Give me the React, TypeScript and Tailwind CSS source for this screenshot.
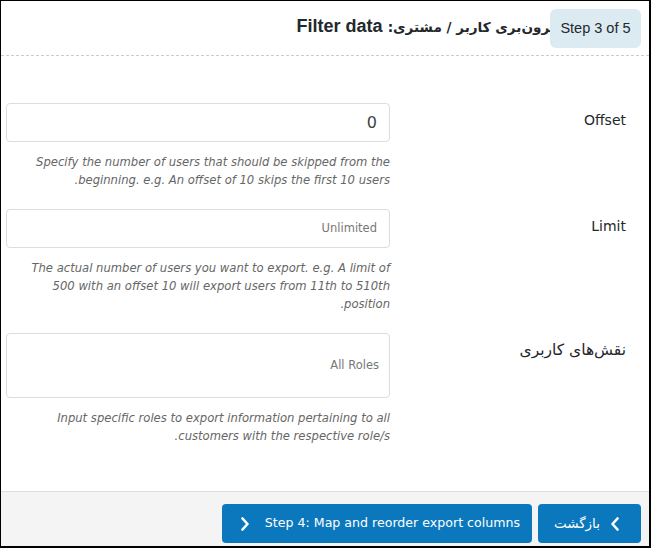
import React from "react";

const sans = "font-['DejaVu_Sans',sans-serif]";

function Chevron({ dir }: { dir: "left" | "right" }) {
  return (
    <svg width="10" height="14" viewBox="0 0 10 14" className="shrink-0">
      <polyline
        points={dir === "left" ? "7.5,1.5 2.5,7 7.5,12.5" : "2.5,1.5 7.5,7 2.5,12.5"}
        fill="none"
        stroke="white"
        strokeWidth="2.6"
        strokeLinecap="round"
        strokeLinejoin="round"
      />
    </svg>
  );
}

type Line = { text: string; tail?: string };

function Row({
  label,
  labelClass,
  children,
  help,
}: {
  label: string;
  labelClass: string;
  children: React.ReactNode;
  help: Line[];
}) {
  return (
    <div className="flex">
      {/* Label cell */}
      <div className="w-[259px] shrink-0 pr-[23px] pt-[4px] text-right">
        <span className={`${sans} leading-[20px] text-[#23282d] ${labelClass}`}>{label}</span>
      </div>
      {/* Field cell */}
      <div className="w-[384px] shrink-0">
        {children}
        <div className={`${sans} mt-[11px] text-[11.6px] italic leading-[18px] text-[#666]`}>
          {help.map((line, i) => (
            <div key={i} className="whitespace-nowrap">
              <bdi dir="ltr">{line.text}</bdi>
              {line.tail}
            </div>
          ))}
        </div>
      </div>
    </div>
  );
}

export default function App() {
  return (
    <div
      dir="rtl"
      className="flex h-[548px] w-[651px] flex-col overflow-hidden border-t border-l border-r-2 border-b-2 border-black bg-white"
    >
      {/* Header */}
      <div className="relative h-[55px] shrink-0 border-b border-dashed border-[#ccc]">
        <h2 className="pr-[94px] pt-[13px] text-right font-['Liberation_Sans','DejaVu_Sans',sans-serif] text-[18px] font-bold leading-[24px] text-[#23282d] whitespace-nowrap">
          <span className={`${sans} text-[13.6px]`}>برون‌بری کاربر / مشتری:</span> Filter data
        </h2>
        <div
          dir="ltr"
          className="absolute right-[8px] top-[8px] flex h-[39px] w-[91px] items-center justify-center rounded-[6px] bg-[#dceaf2] font-['Liberation_Sans',sans-serif] text-[14.5px] text-[#23282d]"
        >
          Step 3 of 5
        </div>
      </div>

      {/* Form */}
      <div className="flex flex-1 flex-col gap-[20px] pt-[47px]">
        <Row
          label="Offset"
          labelClass="text-[14px]"
          help={[
            { text: "Specify the number of users that should be skipped from the" },
            { text: "beginning. e.g. An offset of 10 skips the first 10 users", tail: "." },
          ]}
        >
          <div className={`${sans} flex h-[39px] items-center rounded-[4px] border border-[#ddd] px-[12px] text-[16px] text-[#444]`}>
            0
          </div>
        </Row>
        <Row
          label="Limit"
          labelClass="text-[14px]"
          help={[
            { text: "The actual number of users you want to export. e.g. A limit of" },
            { text: "500 with an offset 10 will export users from 11th to 510th" },
            { text: "position", tail: "." },
          ]}
        >
          <div className={`${sans} flex h-[39px] items-center rounded-[4px] border border-[#ddd] px-[12px] text-[11.5px] text-[#777]`}>
            Unlimited
          </div>
        </Row>
        <Row
          label="نقش‌های کاربری"
          labelClass="text-[15.5px]"
          help={[
            { text: "Input specific roles to export information pertaining to all" },
            { text: "customers with the respective role/s", tail: "." },
          ]}
        >
          <div className={`${sans} flex h-[65px] items-center rounded-[4px] border border-[#ddd] px-[10px] text-[11.5px] text-[#777]`}>
            All Roles
          </div>
        </Row>
      </div>

      {/* Footer */}
      <div className="flex h-[55px] shrink-0 items-start gap-[6px] border-t border-[#ddd] bg-[#f4f4f4] pr-[8px] pt-[12px]">
        <button
          className={`${sans} flex h-[39px] w-[103px] items-center gap-[10px] rounded-[4px] bg-[#0b78bd] pr-[21px] text-[13.5px] text-white`}
        >
          <Chevron dir="left" />
          <span>بازگشت</span>
        </button>
        <button
          className={`${sans} flex h-[39px] w-[310px] items-center justify-between rounded-[4px] bg-[#0b78bd] pl-[18px] pr-[12px] text-[12.6px] text-white`}
        >
          <span dir="ltr">Step 4: Map and reorder export columns</span>
          <Chevron dir="right" />
        </button>
      </div>
    </div>
  );
}
